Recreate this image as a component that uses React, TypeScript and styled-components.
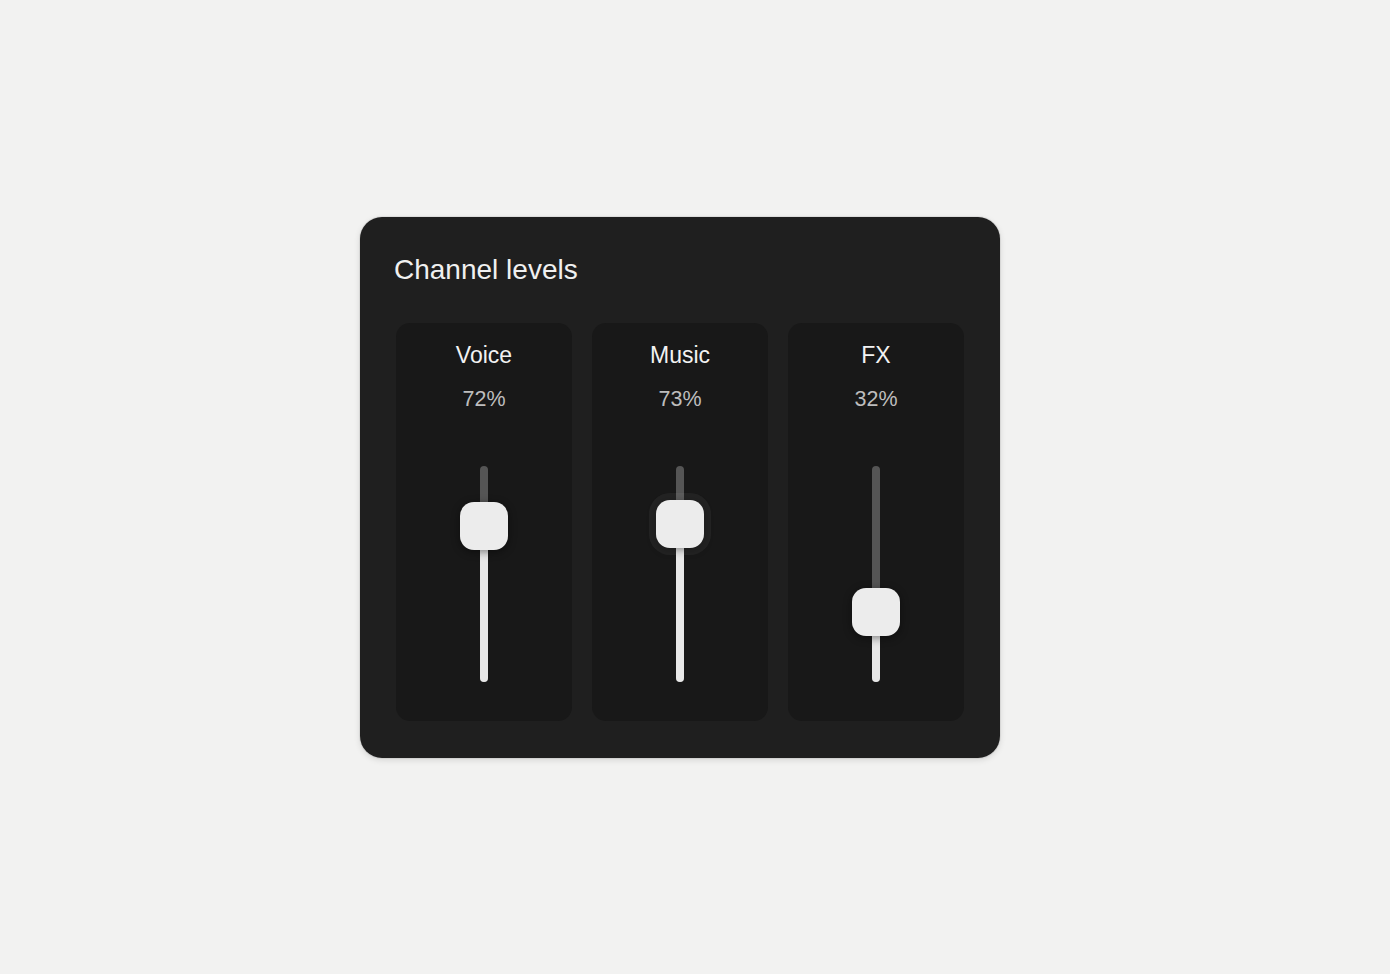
import styled, { createGlobalStyle } from 'styled-components';

const GlobalStyle = createGlobalStyle`
  html, body {
    margin: 0;
    padding: 0;
    background: #f2f2f1;
    font-family: "Liberation Sans", Arial, Helvetica, sans-serif;
  }
`;

const Page = styled.main`
  min-height: 100vh;
  display: grid;
  place-items: center;
  padding-right: 30px;
  box-sizing: border-box;
`;

const Card = styled.section`
  width: 640px;
  box-sizing: border-box;
  padding: 33px 36px 37px;
  background: #1f1f1f;
  border-radius: 22px;
  box-shadow: 0 0 0 1px rgba(0, 0, 0, 0.06), 0 2px 6px rgba(0, 0, 0, 0.12);
`;

const Title = styled.h2`
  margin: 0 0 0 -2px;
  font-size: 28px;
  line-height: 40px;
  font-weight: 400;
  color: #f0f0f0;
`;

const Channels = styled.div`
  margin-top: 33px;
  display: grid;
  grid-template-columns: repeat(3, 1fr);
  gap: 20px;
`;

const Channel = styled.div`
  display: flex;
  flex-direction: column;
  align-items: center;
  padding: 19px 0 39px;
  background: #181818;
  border-radius: 14px;
`;

const Label = styled.div`
  font-size: 23px;
  line-height: 27px;
  color: #f2f2f2;
`;

const Value = styled.div`
  margin-top: 18px;
  font-size: 21.5px;
  line-height: 24px;
  color: #bdbdbd;
`;

const Track = styled.div`
  position: relative;
  margin-top: 55px;
  width: 8px;
  height: 216px;
  border-radius: 4px;
  background: #555;
`;

const Fill = styled.div`
  position: absolute;
  left: 0;
  right: 0;
  bottom: 0;
  border-radius: 4px;
  background: #e8e8e8;
`;

const Thumb = styled.div<{ $active?: boolean }>`
  position: absolute;
  left: 50%;
  width: 48px;
  height: 48px;
  margin-left: -24px;
  box-sizing: border-box;
  border-radius: 14px;
  background: #ececec;
  box-shadow: ${({ $active }) =>
    $active
      ? '0 0 0 7px rgba(255, 255, 255, 0.05), 0 2px 8px rgba(0, 0, 0, 0.45)'
      : '0 2px 8px rgba(0, 0, 0, 0.45)'};
`;

type Level = { name: string; value: number; active?: boolean };

const levels: Level[] = [
  { name: 'Voice', value: 72 },
  { name: 'Music', value: 73, active: true },
  { name: 'FX', value: 32 },
];

const TRACK = 216;

function Fader({ value, active }: { value: number; active?: boolean }) {
  const y = TRACK * (1 - value / 100);
  return (
    <Track>
      <Fill style={{ height: `${value}%` }} />
      <Thumb $active={active} style={{ top: y - 24 }} />
    </Track>
  );
}

export default function App() {
  return (
    <>
      <GlobalStyle />
      <Page>
        <Card>
          <Title>Channel levels</Title>
          <Channels>
            {levels.map((l) => (
              <Channel key={l.name}>
                <Label>{l.name}</Label>
                <Value>{l.value}%</Value>
                <Fader value={l.value} active={l.active} />
              </Channel>
            ))}
          </Channels>
        </Card>
      </Page>
    </>
  );
}
